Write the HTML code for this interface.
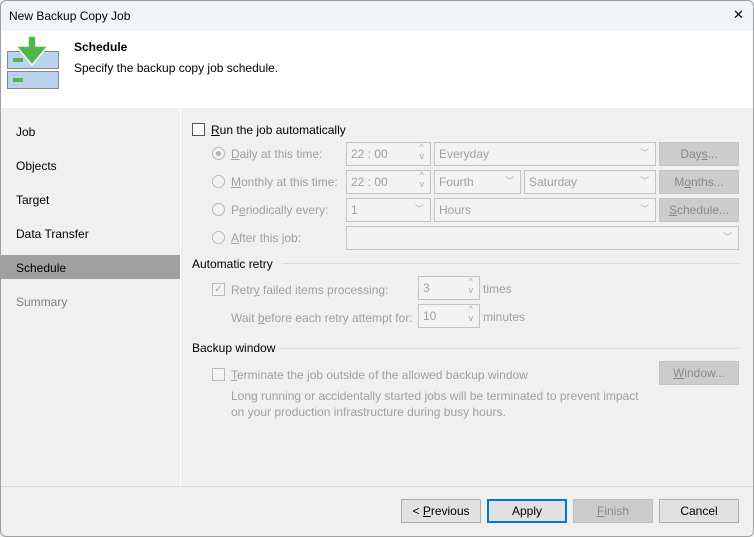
<!DOCTYPE html>
<html><head><style>
*{box-sizing:border-box;margin:0;padding:0}
body{width:754px;height:537px;overflow:hidden;font-family:"Liberation Sans",sans-serif;font-size:12px;color:#000;background:#fff}
.win{position:absolute;left:0;top:0;width:754px;height:537px;background:#f0f0f0;overflow:hidden}
.frame{position:absolute;left:0;top:0;width:754px;height:537px;border:1px solid #a0a0a0;border-radius:6px;pointer-events:none}
.a{position:absolute;white-space:nowrap}
.dis{color:#a0a0a0}
.box{position:absolute;border:1px solid #c4c4c4;background:#f3f3f3;color:#a0a0a0;padding:4px 0 0 4px;height:24px}
.btn{position:absolute;border:1px solid #c4c4c4;background:#cccccc;color:#8a8a8a;text-align:center;line-height:22px;height:24px}
.chev{position:absolute;right:6px;top:3px;color:#a8a8a8;font-size:9px}
.radio{position:absolute;width:13px;height:13px;border:1px solid #b8b8b8;border-radius:50%;background:#f3f3f3}
.cb{position:absolute;width:13px;height:13px;border:1px solid #bbb;background:#f3f3f3}
u{text-decoration:underline}
.line{position:absolute;height:1px;background:#dcdcdc}
.fb{position:absolute;height:24px;border:1px solid #adadad;background:#e1e1e1;text-align:center;line-height:22px}
</style></head><body><div class="win">
<div class="a" style="left:0;top:0;width:754px;height:31px;background:#f1f4f8"></div>
<div class="a" style="left:9px;top:9px">New Backup Copy Job</div>
<div class="a" style="left:733px;top:7px;font-size:13px">✕</div>
<div class="a" style="left:0;top:31px;width:754px;height:77px;background:#fff"></div>
<svg class="a" style="left:6px;top:36px" width="54" height="54" viewBox="0 0 54 54">
<rect x="1.5" y="15.5" width="51" height="17" fill="#b9d3ee" stroke="#888"/>
<rect x="1.5" y="35.5" width="51" height="17" fill="#b9d3ee" stroke="#888"/>
<rect x="7" y="22" width="10" height="4" fill="#4fb848"/>
<rect x="7" y="42" width="10" height="4" fill="#4fb848"/>
<path d="M22 0h8v10h12L26 29 10 10h12z" fill="#4fb848" stroke="#fff" stroke-width="1.5"/>
</svg>
<div class="a" style="left:74px;top:40px;font-weight:bold">Schedule</div>
<div class="a" style="left:74px;top:61px">Specify the backup copy job schedule.</div>
<div class="a" style="left:180px;top:108px;width:1px;height:378px;background:#fff"></div>
<div class="a" style="left:16px;top:125px">Job</div>
<div class="a" style="left:16px;top:159px">Objects</div>
<div class="a" style="left:16px;top:193px">Target</div>
<div class="a" style="left:16px;top:227px">Data Transfer</div>
<div class="a" style="left:1px;top:255px;width:179px;height:24px;background:#a0a0a0"></div>
<div class="a" style="left:16px;top:261px">Schedule</div>
<div class="a dis" style="left:16px;top:295px;color:#808080">Summary</div>

<div class="cb" style="left:192px;top:123px;border-color:#555;background:#fff"></div>
<div class="a" style="left:211px;top:123px"><u>R</u>un the job automatically</div>

<div class="radio" style="left:212px;top:147px"><div style="position:absolute;left:3px;top:3px;width:5px;height:5px;border-radius:50%;background:#b0b0b0"></div></div>
<div class="a dis" style="left:231px;top:147px"><u>D</u>aily at this time:</div>
<div class="radio" style="left:212px;top:175px"></div>
<div class="a dis" style="left:231px;top:175px"><u>M</u>onthly at this time:</div>
<div class="radio" style="left:212px;top:203px"></div>
<div class="a dis" style="left:231px;top:203px">P<u>e</u>riodically every:</div>
<div class="radio" style="left:212px;top:231px"></div>
<div class="a dis" style="left:231px;top:231px"><u>A</u>fter this job:</div>

<div class="box" style="left:346px;top:142px;width:85px">22 : 00<span class="chev" style="top:0;line-height:9px">^<br>v</span></div>
<div class="box" style="left:346px;top:170px;width:85px">22 : 00<span class="chev" style="top:0;line-height:9px">^<br>v</span></div>
<div class="box" style="left:346px;top:198px;width:85px">1<span class="chev">﹀</span></div>
<div class="box" style="left:346px;top:226px;width:393px"><span class="chev">﹀</span></div>
<div class="box" style="left:434px;top:142px;width:222px">Everyday<span class="chev">﹀</span></div>
<div class="box" style="left:434px;top:170px;width:87px">Fourth<span class="chev">﹀</span></div>
<div class="box" style="left:524px;top:170px;width:132px">Saturday<span class="chev">﹀</span></div>
<div class="box" style="left:434px;top:198px;width:222px">Hours<span class="chev">﹀</span></div>
<div class="btn" style="left:659px;top:142px;width:80px">Day<u>s</u>...</div>
<div class="btn" style="left:659px;top:170px;width:80px">M<u>o</u>nths...</div>
<div class="btn" style="left:659px;top:198px;width:80px"><u>S</u>chedule...</div>

<div class="a" style="left:192px;top:257px">Automatic retry</div>
<div class="line" style="left:282px;top:263px;width:457px"></div>
<div class="cb" style="left:212px;top:283px;color:#aaa;font-size:10px;line-height:11px;text-align:center">✓</div>
<div class="a dis" style="left:231px;top:283px">Retr<u>y</u> failed items processing:</div>
<div class="box" style="left:418px;top:276px;width:62px">3<span class="chev" style="top:0;line-height:9px">^<br>v</span></div>
<div class="a dis" style="left:483px;top:282px">times</div>
<div class="a dis" style="left:231px;top:311px">Wait <u>b</u>efore each retry attempt for:</div>
<div class="box" style="left:418px;top:304px;width:62px">10<span class="chev" style="top:0;line-height:9px">^<br>v</span></div>
<div class="a dis" style="left:483px;top:310px">minutes</div>

<div class="a" style="left:192px;top:341px">Backup window</div>
<div class="line" style="left:278px;top:348px;width:461px"></div>
<div class="cb" style="left:212px;top:368px"></div>
<div class="a dis" style="left:231px;top:368px"><u>T</u>erminate the job outside of the allowed backup window</div>
<div class="btn" style="left:659px;top:361px;width:80px"><u>W</u>indow...</div>
<div class="a dis" style="left:231px;top:389px">Long running or accidentally started jobs will be terminated to prevent impact</div>
<div class="a dis" style="left:231px;top:405px">on your production infrastructure during busy hours.</div>

<div class="a" style="left:0;top:486px;width:754px;height:1px;background:#dadada"></div>
<div class="fb" style="left:401px;top:499px;width:80px">&lt; <u>P</u>revious</div>
<div class="fb" style="left:487px;top:499px;width:80px;border:2px solid #0078d7;line-height:20px">Apply</div>
<div class="fb" style="left:573px;top:499px;width:80px;background:#ccc;border-color:#bfbfbf;color:#8a8a8a"><u>F</u>inish</div>
<div class="fb" style="left:659px;top:499px;width:80px">Cancel</div>
<div class="frame"></div>
</div></body></html>
